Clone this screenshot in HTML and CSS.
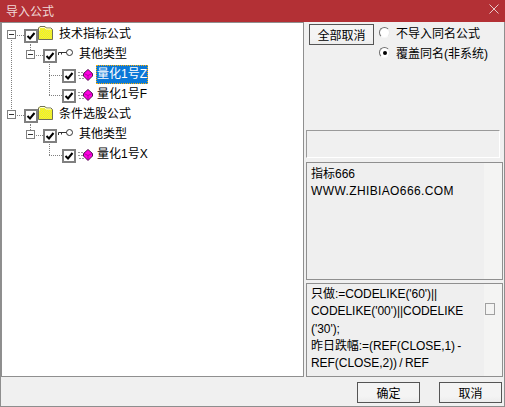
FILE: index.html
```html
<!DOCTYPE html>
<html lang="zh">
<head>
<meta charset="utf-8">
<title>导入公式</title>
<link rel="stylesheet" href="styles.css">
</head>
<body>
<svg class="defs" width="0" height="0">
  <defs>
    <pattern id="dither" width="2" height="2" patternUnits="userSpaceOnUse">
      <rect width="2" height="2" fill="#ffff00"/>
      <rect width="1" height="1" fill="#e0e060"/>
      <rect x="1" y="1" width="1" height="1" fill="#e0e060"/>
    </pattern>
    <symbol id="folder" viewBox="0 0 15 14">
      <path d="M0.5 13.5V2L2 0.5H7L8.5 2H13L14.5 3.5V13.5Z" fill="url(#dither)" stroke="#707058"/>
      <path d="M1.5 4.5V2.5L2.5 1.5H6.5L8 3H13" fill="none" stroke="#ffffe0"/>
    </symbol>
    <symbol id="key" viewBox="0 0 16 8">
      <path d="M0.5 6V3.5H9M3.5 3.5V5.5" stroke="#333" stroke-width="1" fill="none"/>
      <circle cx="11.5" cy="3.5" r="3" fill="#fff" stroke="#333"/>
    </symbol>
    <symbol id="gem" viewBox="0 0 16 12">
      <path d="M0 3.5H5M0 6.5H5M1 9.5H6" stroke="#999" stroke-dasharray="2 1"/>
      <path d="M10 0.5L14.5 4.5V7L10 11.5L5.5 7V4.5Z" fill="#ff00e0" stroke="#501850"/>
      <path d="M6 4.5L10 6.5L14 4.5M10 6.5V11" fill="none" stroke="#900090" stroke-width="0.7"/>
    </symbol>
    <symbol id="check" viewBox="0 0 10 10">
      <path d="M1.5 5L4 7.5L8.5 2" fill="none" stroke="#000" stroke-width="2"/>
    </symbol>
  </defs>
</svg>
<div class="window">
  <header class="titlebar">
    <span class="title">导入公式</span>
    <svg class="close" width="10" height="10" viewBox="0 0 10 10"><path d="M0.5 0.5L9.5 9.5M9.5 0.5L0.5 9.5" stroke="#e8c8c8" fill="none"/></svg>
  </header>
  <div class="body">
    <div class="main">
      <div class="tree">
        <div class="row lvl0 open-trunk"><i class="drop"></i><span class="toggle"></span><span class="box"><svg width="10" height="10"><use href="#check"/></svg></span><svg class="ico-folder"><use href="#folder"/></svg><span class="label">技术指标公式</span></div>
        <div class="row lvl1 kids-two"><span class="toggle"></span><span class="box"><svg width="10" height="10"><use href="#check"/></svg></span><svg class="ico-key"><use href="#key"/></svg><span class="label">其他类型</span></div>
        <div class="row lvl2"><span class="box"><svg width="10" height="10"><use href="#check"/></svg></span><svg class="ico-gem"><use href="#gem"/></svg><span class="label selected">量化1号Z</span></div>
        <div class="row lvl2"><span class="box"><svg width="10" height="10"><use href="#check"/></svg></span><svg class="ico-gem"><use href="#gem"/></svg><span class="label">量化1号F</span></div>
        <div class="row lvl0"><i class="drop"></i><span class="toggle"></span><span class="box"><svg width="10" height="10"><use href="#check"/></svg></span><svg class="ico-folder"><use href="#folder"/></svg><span class="label">条件选股公式</span></div>
        <div class="row lvl1 kids-one"><span class="toggle"></span><span class="box"><svg width="10" height="10"><use href="#check"/></svg></span><svg class="ico-key"><use href="#key"/></svg><span class="label">其他类型</span></div>
        <div class="row lvl2"><span class="box"><svg width="10" height="10"><use href="#check"/></svg></span><svg class="ico-gem"><use href="#gem"/></svg><span class="label">量化1号X</span></div>
      </div>
      <aside class="side">
        <div class="controls">
          <button class="btn cancel-all">全部取消</button>
          <div class="radios">
            <label class="radio"><span class="dot"></span>不导入同名公式</label>
            <label class="radio"><span class="dot on"></span>覆盖同名(非系统)</label>
          </div>
        </div>
        <div class="blank"></div>
        <div class="panel info">指标666<br><span class="url">WWW.ZHIBIAO666.COM</span></div>
        <div class="panel code">
          <div class="code-text">只做:=CODELIKE('60')||<br>CODELIKE('00')||CODELIKE<br>('30');<br>昨日跌幅:=(REF(CLOSE,1) -<br>REF(CLOSE,2)) / REF</div>
          <span class="square"></span>
        </div>
      </aside>
    </div>
    <footer class="footer">
      <button class="btn ok">确定</button>
      <button class="btn cancel">取消</button>
    </footer>
  </div>
</div>
</body>
</html>
```
FILE: styles.css
```css
* { box-sizing: border-box; }
html, body { margin: 0; padding: 0; }
body {
  width: 505px; height: 407px; overflow: hidden;
  font-family: "Liberation Sans", "Noto Sans CJK SC", sans-serif;
  font-size: 12px; color: #000; background: #f0f0f0;
}
.defs { position: absolute; }
.window { width: 505px; height: 407px; display: flex; flex-direction: column; border: 1px solid #8e8e8e; border-top: 0; }
.titlebar { height: 22px; margin: 0 -1px; background: #b33035; color: #f0d8d8; display: flex; align-items: center; justify-content: space-between; padding: 0 6px 4px 6px; flex: none; }
.title { font-size: 12px; padding-top: 2px; }
.body { flex: 1; display: flex; flex-direction: column; min-height: 0; }
.main { height: 355px; display: flex; flex: none; }
.tree { width: 303px; background: #fff; border: 1px solid #8f8f8f; padding: 2px 0 0 0; flex: none; background-clip: padding-box; }
.row { height: 20px; display: flex; align-items: center; position: relative; }
.lvl0 { padding-left: 5px; }
.lvl1 { padding-left: 24px; }
.lvl2 { padding-left: 60px; }

/* dotted tree connectors */
.row::before, .row::after, .drop { content: ""; position: absolute; display: block; }
.lvl0::before { left: 15px; top: 10px; width: 7px; border-top: 1px dotted #808080; }
.lvl1::before { left: 34px; top: 10px; width: 7px; border-top: 1px dotted #808080; }
.lvl2::before { left: 47px; top: 10px; width: 13px; border-top: 1px dotted #808080; }
.drop { left: 28px; top: 19px; height: 6px; border-left: 1px dotted #808080; }
.open-trunk::after { left: 9px; top: 15px; height: 75px; border-left: 1px dotted #808080; }
.kids-two::after { left: 47px; top: 19px; height: 31px; border-left: 1px dotted #808080; }
.kids-one::after { left: 47px; top: 19px; height: 11px; border-left: 1px dotted #808080; }

.toggle { width: 9px; height: 9px; border: 1px solid #808080; background: #fff; position: relative; flex: none; margin-bottom: 1px; }
.toggle::after { content: ""; position: absolute; left: 1px; right: 1px; top: 3px; height: 1px; background: #333; }
.box { width: 14px; height: 14px; border: 2px solid #808080; background: #fff; display: flex; align-items: center; justify-content: center; flex: none; margin: 2px 0 0 8px; position: relative; }
.lvl2 .box { margin-left: 0; }
.box svg { display: block; }
.ico-folder { width: 15px; height: 14px; margin: 0 0 4px 0; flex: none; }
.ico-key { width: 16px; height: 8px; margin: 0 0 4px 1px; flex: none; }
.ico-gem { width: 16px; height: 12px; margin: 0 0 0 2px; flex: none; }
.label { margin: 0 0 2px 4px; padding: 1px; line-height: 15px; color: #000; }
.lvl0 .label { margin-left: 5px; }
.lvl2 .label { margin-left: 2px; }
.selected { background: #0a78d7; color: #fff; outline: 1px dotted #ffb000; outline-offset: -1px; padding: 2px 1px; }
.side { flex: 1; display: flex; flex-direction: column; padding: 0 1px 0 2px; min-width: 0; }
.controls { display: flex; height: 108px; padding: 2px 0 0 3px; flex: none; }
.btn { font: inherit; background: linear-gradient(#f4f4f4, #f4f4f4 70%, #ececec); border: 1px solid #555; padding: 0; color: #000; }
.cancel-all { width: 65px; height: 21px; }
.radios { margin-left: 5px; display: flex; flex-direction: column; gap: 5px; padding-top: 1px; }
.radio { display: flex; align-items: center; height: 15px; }
.dot { width: 11px; height: 11px; border-radius: 50%; background: #fff; border: 1px solid; border-color: #707070 #e8e8e8 #f8f8f8 #707070; margin-right: 6px; position: relative; flex: none; }
.dot.on::after { content: ""; position: absolute; left: 2.5px; top: 2.5px; width: 4px; height: 4px; border-radius: 50%; background: #000; }
.blank { height: 28px; margin: 0 3px 0 0; border: 1px solid #9a9a9a; border-right-color: #fff; border-bottom-color: #fff; flex: none; }
.panel { border: 1px solid #8f8f8f; background: linear-gradient(90deg, #efefef 177px, #f4f4f3 177px); padding: 2px 4px; color: #000; }
.info { margin-top: 4px; height: 118px; padding-top: 3px; line-height: 17px; }
.url { letter-spacing: .38px; }
.code { margin-top: 3px; flex: 1; display: flex; line-height: 17.3px; min-height: 0; }
.code-text { flex: 1; white-space: nowrap; letter-spacing: -.05px; word-spacing: -1px; }
.square { width: 10px; height: 12px; border: 1px solid #a0a0a0; margin: 17px 3px 0 0; flex: none; }
.footer { display: flex; justify-content: flex-end; gap: 19px; padding: 5px 2px 0 0; }
.ok, .cancel { width: 63px; height: 21px; }
```
